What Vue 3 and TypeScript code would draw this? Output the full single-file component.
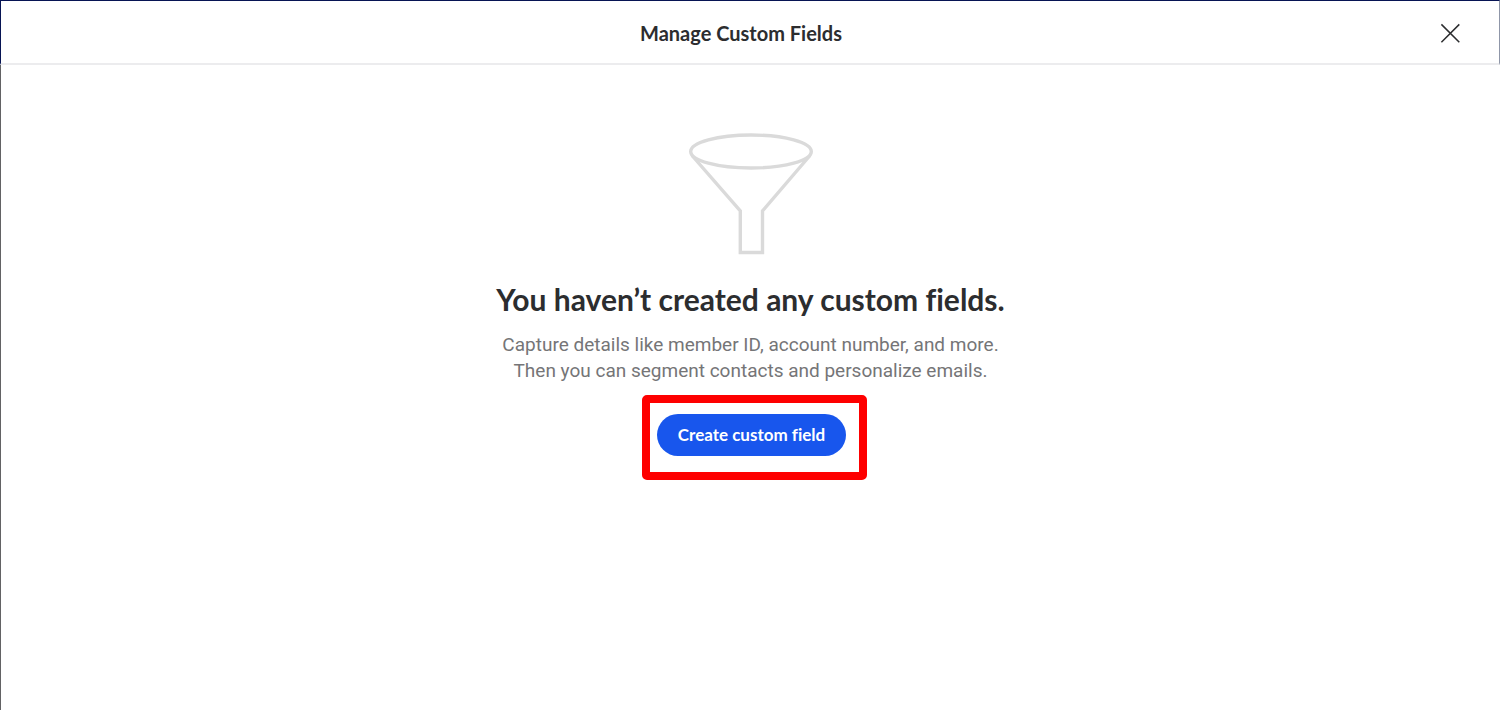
<script setup lang="ts">
const emit = defineEmits<{ close: []; create: [] }>()
</script>

<template>
  <div class="modal" role="dialog" aria-labelledby="modal-title">
    <header class="header">
      <h1 id="modal-title" class="title">Manage Custom Fields</h1>
      <button class="close" type="button" aria-label="Close" @click="emit('close')">
        <svg width="20" height="20" viewBox="0 0 20 20" fill="none" aria-hidden="true">
          <path d="M1.400 1.400L19.300 19.300M19.300 1.400L1.400 19.300" stroke="#2c2d2f" stroke-width="1.500" />
        </svg>
      </button>
    </header>
    <main class="content">
      <svg class="funnel" width="126" height="124" viewBox="0 0 126 124" fill="none" aria-hidden="true">
        <g stroke="#dadada" stroke-width="3.400">
          <ellipse cx="63" cy="19.500" rx="60.300" ry="16.500" />
          <path d="M4 23.500L52.300 79V120.500H74.500V79L122 23.500" />
        </g>
      </svg>
      <h2 class="heading">You haven’t created any custom fields.</h2>
      <p class="copy">
        Capture details like member ID, account number, and more.<br />
        Then you can segment contacts and personalize emails.
      </p>
      <div class="highlight">
        <button class="create" type="button" @click="emit('create')">Create custom field</button>
      </div>
    </main>
  </div>
</template>

<style>
body {
  margin: 0;
  background: #fff;
}
</style>

<style scoped>
.modal {
  box-sizing: border-box;
  min-height: 100vh;
  border-left: 1px solid #626264;
  background: #fff;
  color: #2c2d2f;
  font-family: Lato, "Open Sans", sans-serif;
  font-variant-ligatures: none;
}

.header {
  box-sizing: border-box;
  display: flex;
  align-items: center;
  height: 65px;
  margin-left: -1px;
  padding: 2px 31px 0 49px;
  border-top: 1px solid #071454;
  border-left: 1px solid #071454;
  border-right: 1px solid #8f96a8;
  border-bottom: 2px solid #ececee;
}

.title {
  flex: 1;
  margin: 0;
  font-size: 20px;
  line-height: 24px;
  font-weight: 700;
  text-align: center;
}

.close {
  display: flex;
  align-items: center;
  justify-content: center;
  width: 36px;
  height: 36px;
  padding: 0;
  border: 0;
  background: none;
  cursor: pointer;
}

.content {
  display: flex;
  flex-direction: column;
  align-items: center;
  padding: 67px 20px 40px;
}

.heading {
  margin: 23px 0 0;
  font-size: 30px;
  line-height: 40px;
  font-weight: 700;
  text-align: center;
}

.copy {
  margin: 13px 0 0;
  color: #757577;
  font-family: Roboto, sans-serif;
  font-size: 19px;
  line-height: 26px;
  text-align: center;
}

.highlight {
  margin: 11px 0 0 8px;
  padding: 11px 13px 16px 7px;
  border: 8px solid #fe0000;
  border-radius: 5px;
}

.create {
  display: block;
  min-width: 189px;
  height: 42px;
  padding: 0 20px;
  border: 0;
  border-radius: 21px;
  background: #1856ed;
  color: #fff;
  font-family: inherit;
  font-size: 17px;
  font-variant-ligatures: none;
  line-height: 24px;
  font-weight: 700;
  cursor: pointer;
}
</style>
